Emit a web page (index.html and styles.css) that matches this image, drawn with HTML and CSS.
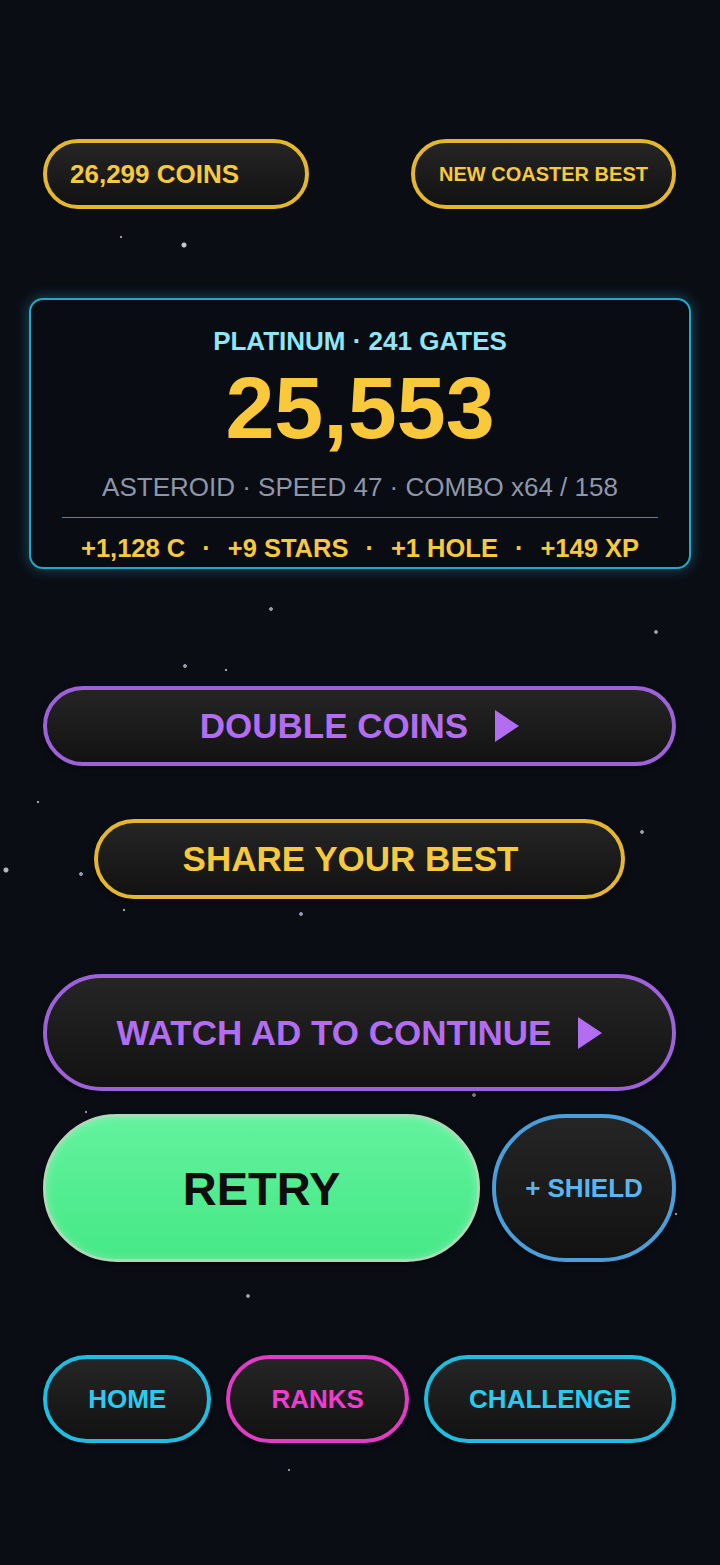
FILE: index.html
```html
<!DOCTYPE html>
<html>
	<head>
		<title>Run Over</title>
		<link rel="stylesheet" href="styles.css">
	</head>
	<body>
		<div class="screen">
			<div class="top-row">
				<div class="pill coins">26,299 COINS</div>
				<div class="pill best">NEW COASTER BEST</div>
			</div>

			<div class="score-card">
				<div class="tier">PLATINUM · 241 GATES</div>
				<div class="score">25,553</div>
				<div class="meta">ASTEROID · SPEED 47 · COMBO x64 / 158</div>
				<div class="divider"></div>
				<div class="rewards">
					<span>+1,128 C</span>
					<span class="dot">·</span>
					<span>+9 STARS</span>
					<span class="dot">·</span>
					<span>+1 HOLE</span>
					<span class="dot">·</span>
					<span>+149 XP</span>
				</div>
			</div>

			<button class="btn purple double">
				DOUBLE COINS
				<svg class="play" width="24" height="32" viewBox="0 0 24 32"><polygon points="0,0 24,16 0,32" /></svg>
			</button>

			<button class="btn gold share">SHARE YOUR BEST</button>

			<button class="btn purple watch">
				WATCH AD TO CONTINUE
				<svg class="play" width="24" height="32" viewBox="0 0 24 32"><polygon points="0,0 24,16 0,32" /></svg>
			</button>

			<div class="action-row">
				<button class="btn retry">RETRY</button>
				<button class="btn shield">+ SHIELD</button>
			</div>

			<!-- bottom navigation -->
			<div class="nav">
				<button class="btn cyan">HOME</button>
				<button class="btn pink">RANKS</button>
				<button class="btn cyan">CHALLENGE</button>
			</div>
		</div>
	</body>
</html>
```

FILE: styles.css
```css
body {
	margin: 0;
	padding: 0;
	background-color: #0b0d15;
	/* stars */
	background-image:
		radial-gradient(circle at 121px 237px, #9a9cae 1px, transparent 1.6px),
		radial-gradient(circle at 184px 245px, #c4c6d2 2px, transparent 3px),
		radial-gradient(circle at 271px 609px, #9a9cae 1.5px, transparent 2.2px),
		radial-gradient(circle at 656px 632px, #9a9cae 1.5px, transparent 2.2px),
		radial-gradient(circle at 185px 666px, #9a9cae 1.5px, transparent 2.2px),
		radial-gradient(circle at 226px 670px, #9a9cae 1px, transparent 1.6px),
		radial-gradient(circle at 38px 802px, #9a9cae 1px, transparent 1.6px),
		radial-gradient(circle at 6px 870px, #b4b6c4 2px, transparent 3px),
		radial-gradient(circle at 81px 874px, #9a9cae 1.5px, transparent 2.2px),
		radial-gradient(circle at 642px 832px, #9a9cae 1.5px, transparent 2.2px),
		radial-gradient(circle at 124px 910px, #9a9cae 1px, transparent 1.6px),
		radial-gradient(circle at 301px 914px, #9a9cae 1.5px, transparent 2.2px),
		radial-gradient(circle at 474px 1095px, #8a8c9e 1.5px, transparent 2.2px),
		radial-gradient(circle at 86px 1112px, #8a8c9e 1px, transparent 1.6px),
		radial-gradient(circle at 676px 1214px, #9a9cae 1px, transparent 1.6px),
		radial-gradient(circle at 248px 1296px, #9a9cae 1.5px, transparent 2.2px),
		radial-gradient(circle at 289px 1470px, #8a8c9e 1px, transparent 1.6px);
	background-repeat: no-repeat;
	font-family: "Liberation Sans", Arial, sans-serif;
	font-weight: bold;
}

.screen {
	box-sizing: border-box;
	min-height: 1565px;
	padding: 139px 44px 0 43px;
}

.top-row {
	display: flex;
	justify-content: space-between;
}

.pill {
	box-sizing: border-box;
	height: 70px;
	display: flex;
	align-items: center;
	border: 4px solid #e4b72f;
	border-radius: 35px;
	background: linear-gradient(#252525, #121212);
	color: #f7c93c;
}

.coins {
	width: 266px;
	padding-left: 23px;
	font-size: 26px;
}

.best {
	width: 265px;
	justify-content: center;
	font-size: 20px;
}

.score-card {
	box-sizing: border-box;
	height: 271px;
	margin: 89px -15px 0 -14px;
	padding: 26px 31px 0;
	border: 2px solid #23a8c8;
	border-radius: 14px;
	background-color: #0a0c13;
	box-shadow: 0 0 14px rgba(35, 168, 200, 0.45);
	text-align: center;
}

.tier {
	font-size: 26px;
	line-height: 30px;
	color: #8fe6f6;
}

.score {
	margin-top: 12px;
	font-size: 88px;
	line-height: 80px;
	color: #f9c93b;
}

.meta {
	margin-top: 24px;
	font-size: 26px;
	line-height: 30px;
	font-weight: normal;
	color: #8d97a9;
}

.divider {
	margin-top: 15px;
	border-top: 1px solid #1e9ab8;
}

.rewards {
	margin-top: 15px;
	display: flex;
	justify-content: center;
	gap: 17px;
	font-size: 25.5px;
	line-height: 30px;
	color: #f7c93c;
}

.btn {
	box-sizing: border-box;
	display: flex;
	align-items: center;
	justify-content: center;
	width: 100%;
	padding: 0;
	border: 4px solid;
	border-radius: 999px;
	background: linear-gradient(#252525, #121212);
	font-family: inherit;
	font-weight: bold;
	box-shadow: 0 3px 6px rgba(0, 0, 0, 0.4);
}

.purple {
	border-color: #9d61d8;
	color: #b26df1;
	font-size: 35px;
}

.gold {
	border-color: #e4b72f;
	color: #f7c93c;
	font-size: 35px;
}

.play {
	margin-left: 27px;
	fill: #b26df1;
}

.double {
	height: 80px;
	margin-top: 117px;
}

.share {
	width: calc(100% - 102px);
	height: 80px;
	margin: 53px 51px 0;
	padding-right: 18px;
}

.watch {
	height: 117px;
	margin-top: 75px;
}

.action-row {
	display: flex;
	gap: 12px;
	height: 148px;
	margin-top: 23px;
}

.retry {
	flex: 1;
	height: 100%;
	border: 3px solid #a8dbb6;
	background: linear-gradient(#62f29d, #46e886);
	color: #0e0e0e;
	font-size: 47px;
	box-shadow: inset 0 0 10px rgba(255, 255, 255, 0.25), 0 3px 6px rgba(0, 0, 0, 0.4);
}

.shield {
	width: 184px;
	flex: none;
	height: 100%;
	border-color: #4a9fda;
	color: #5ab6f2;
	font-size: 26px;
}

.nav {
	display: flex;
	gap: 15px;
	height: 88px;
	margin-top: 93px;
}

.nav .btn {
	width: auto;
	flex: 1 1 auto;
	padding: 0 40px;
	font-size: 26px;
}

.cyan {
	border-color: #21bde0;
	color: #27cdf0;
}

.pink {
	border-color: #e03cc6;
	color: #f13bd0;
}
```
